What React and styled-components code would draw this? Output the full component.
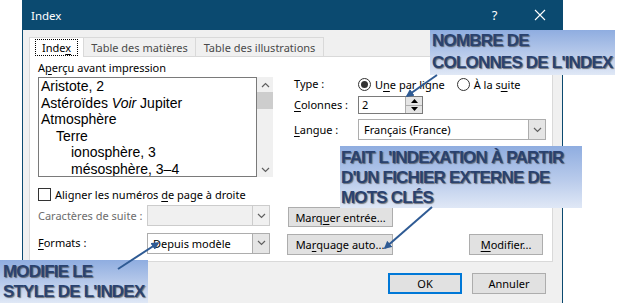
import React from "react";
import styled, { createGlobalStyle } from "styled-components";

const Global = createGlobalStyle`
  html, body { margin: 0; padding: 0; background: #ffffff; }
  body { font-family: "Noto Sans", "Open Sans", sans-serif; font-size: 11px; color: #000; }
`;

const Page = styled.div`
  position: relative;
  width: 622px;
  height: 303px;
  overflow: hidden;
  background: #fff;
`;

const Dialog = styled.div`
  margin-left: 22px;
  width: 539px;
  height: 303px;
  border-left: 1px solid #0b4a70;
  border-right: 1px solid #0b4a70;
  background: #f0f0f0;
  display: flex;
  flex-direction: column;
`;

const TitleBar = styled.div`
  height: 30px;
  flex: none;
  background: #0b4a70;
  color: #fff;
  display: flex;
  align-items: center;
  padding-left: 8px;
  font-size: 11.5px;
`;

const Title = styled.span`
  flex: 1;
`;

const TitleBtn = styled.span`
  width: 45px;
  display: flex;
  justify-content: center;
  align-items: center;
  font-size: 13px;
  color: #fff;
`;

const Body = styled.div`
  padding: 7px 9px 0 6px;
  display: flex;
  flex-direction: column;
`;

const Tabs = styled.div`
  display: flex;
  height: 20px;
`;

const Tab = styled.div`
  width: ${p => p.$w}px;
  height: 20px;
  box-sizing: border-box;
  display: flex;
  align-items: center;
  justify-content: center;
  border: 1px solid #d9d9d9;
  border-bottom: ${p => (p.$active ? "none" : "1px solid #d9d9d9")};
  border-left: ${p => (p.$first ? "1px solid #d9d9d9" : "none")};
  background: ${p => (p.$active ? "#fff" : "#f0f0f0")};
  color: ${p => (p.$active ? "#000" : "#4a4a4a")};
  position: relative;
  z-index: 1;
  white-space: nowrap;
`;

const Focus = styled.span`
  outline: 1px dotted #000;
  padding: 0 6px;
  line-height: 15px;
`;

const Panel = styled.div`
  height: 206px;
  box-sizing: border-box;
  border: 1px solid #d9d9d9;
  margin-top: -1px;
  background: #fff;
  padding: 3px 8px 0 8px;
  display: flex;
  flex-direction: column;
`;

const TopSection = styled.div`
  display: flex;
`;

const LeftCol = styled.div`
  width: 235px;
  display: flex;
  flex-direction: column;
`;

const Label = styled.div`
  line-height: 16px;
  height: 16px;
  white-space: nowrap;
  color: ${p => (p.$disabled ? "#6d6d6d" : "#000")};
  width: ${p => (p.$w ? p.$w + "px" : "auto")};
  flex: none;
`;

const PreviewWrap = styled.div`
  display: flex;
  margin-top: 1px;
  height: 100px;
`;

const Preview = styled.div`
  width: 219px;
  box-sizing: border-box;
  border: 1px solid #7a7a7a;
  padding-left: 2px;
  font-family: "Liberation Sans", Arial, sans-serif;
  font-size: 14px;
  line-height: 16.5px;
  overflow: hidden;
`;

const Entry = styled.div`
  padding-left: ${p => p.$level * 15}px;
  white-space: nowrap;
`;

const Scrollbar = styled.div`
  width: 16px;
  background: #f0f0f0;
  display: flex;
  flex-direction: column;
  align-items: center;
`;

const ScrollArrow = styled.div`
  height: 15px;
  width: 16px;
  display: flex;
  align-items: center;
  justify-content: center;
`;

const Thumb = styled.div`
  width: 16px;
  height: 17px;
  background: #cdcdcd;
`;

const Spacer = styled.div`
  flex: 1;
`;

const RightCol = styled.div`
  margin-left: 21px;
  padding-top: 16px;
  display: flex;
  flex-direction: column;
`;

const FormRow = styled.div`
  display: flex;
  align-items: center;
  margin-top: ${p => p.$mt || 0}px;
`;

const Radio = styled.span`
  width: 13px;
  height: 13px;
  box-sizing: border-box;
  border: 1px solid #333;
  border-radius: 50%;
  display: inline-flex;
  align-items: center;
  justify-content: center;
  margin-right: 4px;
  margin-left: ${p => p.$ml || 0}px;
  &::after {
    content: "";
    width: 7px;
    height: 7px;
    border-radius: 50%;
    background: ${p => (p.$checked ? "#333" : "transparent")};
  }
`;

const Spin = styled.div`
  width: 65px;
  height: 18px;
  box-sizing: border-box;
  border: 1px solid #7a7a7a;
  display: flex;
  background: #fff;
`;

const SpinValue = styled.div`
  flex: 1;
  padding-left: 3px;
  line-height: 16px;
`;

const SpinBtns = styled.div`
  width: 16px;
  display: flex;
  flex-direction: column;
  border-left: 1px solid #adadad;
`;

const SpinBtn = styled.div`
  flex: 1;
  background: #e5e5e5;
  display: flex;
  align-items: center;
  justify-content: center;
  border-bottom: ${p => (p.$top ? "1px solid #adadad" : "none")};
`;

const Combo = styled.div`
  width: ${p => p.$w}px;
  height: 21px;
  box-sizing: border-box;
  border: 1px solid ${p => (p.$disabled ? "#cccccc" : "#adadad")};
  background: ${p => (p.$disabled ? "#f0f0f0" : "#fff")};
  display: flex;
  flex: none;
`;

const ComboText = styled.div`
  flex: 1;
  padding-left: 5px;
  line-height: 19px;
  white-space: nowrap;
`;

const ComboBtn = styled.div`
  width: 16px;
  border-left: 1px solid ${p => (p.$disabled ? "#cccccc" : "#adadad")};
  background: ${p => (p.$disabled ? "#f0f0f0" : "#e5e5e5")};
  display: flex;
  align-items: center;
  justify-content: center;
`;

const CheckRow = styled.div`
  display: flex;
  align-items: center;
  margin-top: 9px;
  height: 16px;
`;

const CheckBox = styled.span`
  width: 13px;
  height: 13px;
  box-sizing: border-box;
  border: 1px solid #333;
  background: #fff;
  margin-right: 4px;
`;

const Button = styled.div`
  width: ${p => p.$w}px;
  height: ${p => p.$h || 21}px;
  box-sizing: border-box;
  border: ${p => (p.$default ? "2px solid #0078d7" : "1px solid #adadad")};
  background: #e1e1e1;
  display: flex;
  align-items: center;
  justify-content: center;
  white-space: nowrap;
  margin-left: ${p => p.$ml || 0}px;
  margin-top: ${p => p.$mt || 0}px;
  align-self: flex-start;
  flex: none;
`;

const Footer = styled.div`
  display: flex;
  justify-content: flex-end;
  padding: 11px 7px 0 0;
  gap: 10px;
`;

const Callout = styled.div`
  position: absolute;
  left: ${p => p.$x}px;
  top: ${p => p.$y}px;
  width: ${p => p.$w}px;
  height: ${p => p.$h}px;
  box-sizing: border-box;
  padding: ${p => p.$pt}px 0 0 ${p => p.$pl}px;
  background: linear-gradient(180deg, #8fade0 0%, #b9cbeb 55%, #e0e8f6 100%);
  font-family: "Liberation Sans", Arial, sans-serif;
  font-weight: bold;
  font-size: 17px;
  letter-spacing: -0.8px;
  line-height: ${p => p.$lh}px;
  color: #2a426f;
  text-shadow: 1px 1px 1px rgba(40, 40, 40, 0.6);
  white-space: nowrap;
`;

const Overlay = styled.svg`
  position: absolute;
  left: 0;
  top: 0;
  pointer-events: none;
`;

const U = styled.span`
  text-decoration: underline;
  text-underline-offset: 2px;
`;

const Chevron = ({ up }) => (
  <svg width="9" height="6" viewBox="0 0 9 6">
    <path
      d={up ? "M1 5 L4.5 1.5 L8 5" : "M1 1 L4.5 4.5 L8 1"}
      fill="none"
      stroke="#606060"
      strokeWidth="1.2"
    />
  </svg>
);

const Tri = ({ up }) => (
  <svg width="7" height="4" viewBox="0 0 7 4">
    <path d={up ? "M0 4 L3.5 0 L7 4 Z" : "M0 0 L3.5 4 L7 0 Z"} fill="#000" />
  </svg>
);

const entries = [
  { level: 0, text: <>Aristote, 2</> },
  { level: 0, text: <>Astéroïdes <i>Voir</i> Jupiter</> },
  { level: 0, text: <>Atmosphère</> },
  { level: 1, text: <>Terre</> },
  { level: 2, text: <>ionosphère, 3</> },
  { level: 2, text: <>mésosphère, 3–4</> },
];

export default function App() {
  return (
    <Page>
      <Global />
      <Dialog>
        <TitleBar>
          <Title>Index</Title>
          <TitleBtn>?</TitleBtn>
          <TitleBtn>
            <svg width="12" height="12" viewBox="0 0 12 12">
              <path d="M1 1 L11 11 M11 1 L1 11" stroke="#fff" strokeWidth="1.1" />
            </svg>
          </TitleBtn>
        </TitleBar>
        <Body>
          <Tabs>
            <Tab $w={55} $active $first>
              <Focus>
                Inde<U>x</U>
              </Focus>
            </Tab>
            <Tab $w={112}>Table des matières</Tab>
            <Tab $w={128}>Table des illustrations</Tab>
          </Tabs>
          <Panel>
            <TopSection>
              <LeftCol>
                <Label>
                  A<U>p</U>erçu avant impression
                </Label>
                <PreviewWrap>
                  <Preview>
                    {entries.map((e, i) => (
                      <Entry key={i} $level={e.level}>
                        {e.text}
                      </Entry>
                    ))}
                  </Preview>
                  <Scrollbar>
                    <ScrollArrow>
                      <Chevron up />
                    </ScrollArrow>
                    <Thumb />
                    <Spacer />
                    <ScrollArrow>
                      <Chevron />
                    </ScrollArrow>
                  </Scrollbar>
                </PreviewWrap>
              </LeftCol>
              <RightCol>
                <FormRow>
                  <Label $w={64}>Type :</Label>
                  <Radio $checked />
                  <span>
                    U<U>n</U>e par ligne
                  </span>
                  <Radio $ml={12} />
                  <span>
                    À la s<U>u</U>ite
                  </span>
                </FormRow>
                <FormRow $mt={4}>
                  <Label $w={64}>
                    <U>C</U>olonnes :
                  </Label>
                  <Spin>
                    <SpinValue>2</SpinValue>
                    <SpinBtns>
                      <SpinBtn $top>
                        <Tri up />
                      </SpinBtn>
                      <SpinBtn>
                        <Tri />
                      </SpinBtn>
                    </SpinBtns>
                  </Spin>
                </FormRow>
                <FormRow $mt={5}>
                  <Label $w={64}>
                    <U>L</U>angue :
                  </Label>
                  <Combo $w={188}>
                    <ComboText>Français (France)</ComboText>
                    <ComboBtn>
                      <Chevron />
                    </ComboBtn>
                  </Combo>
                </FormRow>
              </RightCol>
            </TopSection>
            <CheckRow>
              <CheckBox />
              <span>
                Aligner les numéros <U>d</U>e page à droite
              </span>
            </CheckRow>
            <FormRow $mt={2}>
              <Label $w={109} $disabled>
                Caractères de suite :
              </Label>
              <Combo $w={123} $disabled>
                <ComboText />
                <ComboBtn $disabled>
                  <Chevron />
                </ComboBtn>
              </Combo>
              <Button $w={105} $h={20} $ml={18} $mt={3}>
                Marq<U>u</U>er entrée...
              </Button>
            </FormRow>
            <FormRow $mt={4}>
              <Label $w={109}>
                <U>F</U>ormats :
              </Label>
              <Combo $w={123}>
                <ComboText>Depuis modèle</ComboText>
                <ComboBtn>
                  <Chevron />
                </ComboBtn>
              </Combo>
              <Button $w={106} $ml={17} $mt={3}>
                Ma<U>r</U>quage auto...
              </Button>
              <Button $w={74} $ml={76} $mt={3}>
                <U>M</U>odifier...
              </Button>
            </FormRow>
          </Panel>
          <Footer>
            <Button $w={74} $default>
              OK
            </Button>
            <Button $w={74}>Annuler</Button>
          </Footer>
        </Body>
      </Dialog>

      <Callout $x={430} $y={30} $w={185} $h={45} $pt={0} $pl={2} $lh={22}>
        NOMBRE DE
        <br />
        COLONNES DE L'INDEX
      </Callout>
      <Callout $x={340} $y={146} $w={242} $h={62} $pt={2} $pl={1} $lh={20}>
        FAIT L'INDEXATION À PARTIR
        <br />
        D'UN FICHIER EXTERNE DE
        <br />
        MOTS CLÉS
      </Callout>
      <Callout $x={0} $y={260} $w={148} $h={43} $pt={2} $pl={3} $lh={20}>
        MODIFIE LE
        <br />
        STYLE DE L'INDEX
      </Callout>

      <Overlay width="622" height="303" viewBox="0 0 622 303">
        <defs>
          <marker
            id="ah"
            viewBox="0 0 10 10"
            refX="8"
            refY="5"
            markerWidth="4"
            markerHeight="4"
            orient="auto"
          >
            <path d="M0 0 L10 5 L0 10 Z" fill="#2f5b94" />
          </marker>
        </defs>
        <g stroke="#2f5b94" strokeWidth="2" markerEnd="url(#ah)">
          <line x1="437" y1="75" x2="407" y2="96" />
          <line x1="432" y1="207" x2="385" y2="248" />
          <line x1="118" y1="269" x2="158" y2="243" />
        </g>
      </Overlay>
    </Page>
  );
}
